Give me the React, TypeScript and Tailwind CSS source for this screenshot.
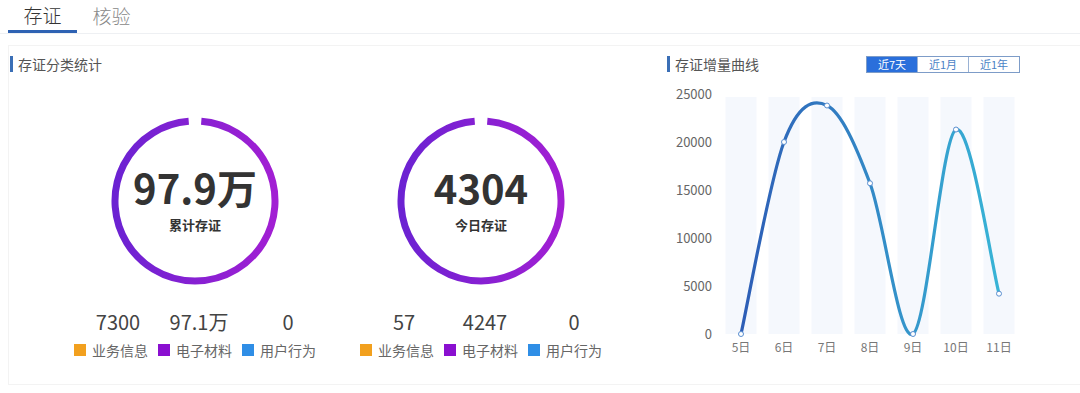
import React from "react";

const FONT = '"Noto Sans CJK SC", "Liberation Sans", sans-serif';

type Stat = { value: string; label: string; color: string };

function Ring({ id }: { id: string }) {
  // arc with a small gap at the top
  const r = 80;
  const cx = 85;
  const cy = 85;
  const gap = (9 * Math.PI) / 180;
  const a0 = -Math.PI / 2 + gap / 2;
  const a1 = -Math.PI / 2 - gap / 2 + 2 * Math.PI;
  const x0 = cx + r * Math.cos(a0);
  const y0 = cy + r * Math.sin(a0);
  const x1 = cx + r * Math.cos(a1);
  const y1 = cy + r * Math.sin(a1);
  return (
    <svg width="170" height="170" viewBox="0 0 170 170">
      <defs>
        <linearGradient id={id} x1="0" y1="0" x2="1" y2="0">
          <stop offset="0%" stopColor="#6b22d2" />
          <stop offset="100%" stopColor="#a21fd3" />
        </linearGradient>
      </defs>
      <path
        d={`M ${x0} ${y0} A ${r} ${r} 0 1 1 ${x1} ${y1}`}
        fill="none"
        stroke={`url(#${id})`}
        strokeWidth="7"
      />
    </svg>
  );
}

function StatBlock({
  id,
  big,
  caption,
  stats,
}: {
  id: string;
  big: string;
  caption: string;
  stats: Stat[];
}) {
  const widths = ["w-[80px]", "w-[82px]", "w-[96px]"];
  return (
    <div className="w-[286px] flex flex-col items-center">
      <div className="relative w-[170px] h-[170px]">
        <Ring id={id} />
        <div className="absolute inset-0 flex flex-col items-center">
          <div className="mt-[48px] text-[40px] leading-[46px] font-bold text-[#333]">
            {big}
          </div>
          <div className="mt-[7px] text-[13px] leading-[16px] font-bold text-[#333]">
            {caption}
          </div>
        </div>
      </div>
      <div className="mt-[24px] flex justify-center pl-[24px] w-full">
        {stats.map((s, i) => (
          <div
            key={s.label}
            className={`${widths[i]} text-center text-[20px] leading-[24px] text-[#444]`}
          >
            {s.value}
          </div>
        ))}
      </div>
      <div className="mt-[8px] flex justify-center gap-[10px]">
        {stats.map((s) => (
          <div key={s.label} className="flex items-center gap-[6px]">
            <span
              className="w-[12px] h-[12px] inline-block"
              style={{ backgroundColor: s.color }}
            />
            <span className="text-[14px] leading-[16px] text-[#666]">
              {s.label}
            </span>
          </div>
        ))}
      </div>
    </div>
  );
}

const days = ["5日", "6日", "7日", "8日", "9日", "10日", "11日"];
const values = [0, 20000, 23800, 15700, 0, 21300, 4200];

function Chart() {
  const x0 = 81;
  const step = 43;
  const yOf = (v: number) => 250 - (v / 25000) * 240;
  const pts = values.map((v, i) => [x0 + i * step, yOf(v)]);
  let d = `M ${pts[0][0]} ${pts[0][1]}`;
  for (let i = 0; i < pts.length - 1; i++) {
    const p0 = pts[Math.max(i - 1, 0)];
    const p1 = pts[i];
    const p2 = pts[i + 1];
    const p3 = pts[Math.min(i + 2, pts.length - 1)];
    const c1x = p1[0] + (p2[0] - p0[0]) / 6;
    const c1y = p1[1] + (p2[1] - p0[1]) / 6;
    const c2x = p2[0] - (p3[0] - p1[0]) / 6;
    const c2y = p2[1] - (p3[1] - p1[1]) / 6;
    d += ` C ${c1x} ${c1y} ${c2x} ${c2y} ${p2[0]} ${p2[1]}`;
  }
  return (
    <svg width="400" height="280" viewBox="0 0 400 280" className="block">
      <defs>
        <linearGradient id="lineGrad" x1="0" y1="0" x2="1" y2="0">
          <stop offset="0%" stopColor="#2d5db6" />
          <stop offset="100%" stopColor="#38b4d6" />
        </linearGradient>
      </defs>
      {pts.map(([x], i) => (
        <rect key={i} x={x - 15.5} y={13} width={31} height={237} fill="#f5f8fd" />
      ))}
      {[0, 5000, 10000, 15000, 20000, 25000].map((v) => (
        <text
          key={v}
          x={52}
          y={yOf(v) + 5}
          textAnchor="end"
          fontSize="13"
          fill="#666"
          fontFamily={FONT}
        >
          {v}
        </text>
      ))}
      {days.map((t, i) => (
        <text
          key={t}
          x={x0 + i * step}
          y={268}
          textAnchor="middle"
          fontSize="12"
          fill="#777"
          fontFamily={FONT}
        >
          {t}
        </text>
      ))}
      <path d={d} fill="none" stroke="url(#lineGrad)" strokeWidth="3.2" strokeLinecap="round" />
      {pts.map(([x, y], i) => (
        <circle key={i} cx={x} cy={y} r="2.5" fill="#fff" stroke="#5a8fd0" strokeWidth="1" />
      ))}
    </svg>
  );
}

export default function App() {
  const left: Stat[] = [
    { value: "7300", label: "业务信息", color: "#f2a01e" },
    { value: "97.1万", label: "电子材料", color: "#8a0fd0" },
    { value: "0", label: "用户行为", color: "#2f8ee6" },
  ];
  const right: Stat[] = [
    { value: "57", label: "业务信息", color: "#f2a01e" },
    { value: "4247", label: "电子材料", color: "#8a0fd0" },
    { value: "0", label: "用户行为", color: "#2f8ee6" },
  ];

  return (
    <div
      className="w-[1080px] h-[393px] bg-white overflow-hidden"
      style={{ fontFamily: FONT }}
    >
      {/* tabs */}
      <div className="h-[34px] border-b border-[#eef0f3] flex pl-[8px]">
        <div className="w-[69px] h-[33px] border-b-[3px] border-[#2e62b3] flex items-center justify-center text-[19px] font-light text-[#333]">
          存证
        </div>
        <div className="w-[69px] h-[33px] flex items-center justify-center text-[19px] font-light text-[#888]">
          核验
        </div>
      </div>

      {/* panel */}
      <div className="ml-[8px] mt-[11px] h-[340px] border border-r-0 border-[#f3f3f3] flex">
        <div className="w-[651px] flex flex-col">
          <div className="mt-[10px] flex items-center">
            <span className="ml-[1px] w-[3px] h-[16px] bg-[#3b6fb6]" />
            <span className="ml-[5px] text-[14px] leading-[16px] text-[#555]">
              存证分类统计
            </span>
          </div>
          <div className="mt-[44px] pl-[43px] flex">
            <StatBlock id="ringA" big="97.9万" caption="累计存证" stats={left} />
            <StatBlock id="ringB" big="4304" caption="今日存证" stats={right} />
          </div>
        </div>

        <div className="flex-1 flex flex-col">
          <div className="mt-[9px] flex items-center">
            <span className="ml-[7px] w-[3px] h-[16px] bg-[#3b6fb6]" />
            <span className="ml-[5px] text-[14px] leading-[18px] text-[#555]">
              存证增量曲线
            </span>
            <div className="ml-[107px] flex h-[17px] border border-[#7d9cc8] text-[11px] leading-[15px]">
              <div className="w-[50px] bg-[#2a6fdb] text-white text-center">近7天</div>
              <div className="w-[51px] text-[#4a7fc6] text-center border-l border-[#9ab2d4]">近1月</div>
              <div className="w-[51px] text-[#4a7fc6] text-center border-l border-[#9ab2d4]">近1年</div>
            </div>
          </div>
          <div className="mt-[11px]">
            <Chart />
          </div>
        </div>
      </div>
    </div>
  );
}
